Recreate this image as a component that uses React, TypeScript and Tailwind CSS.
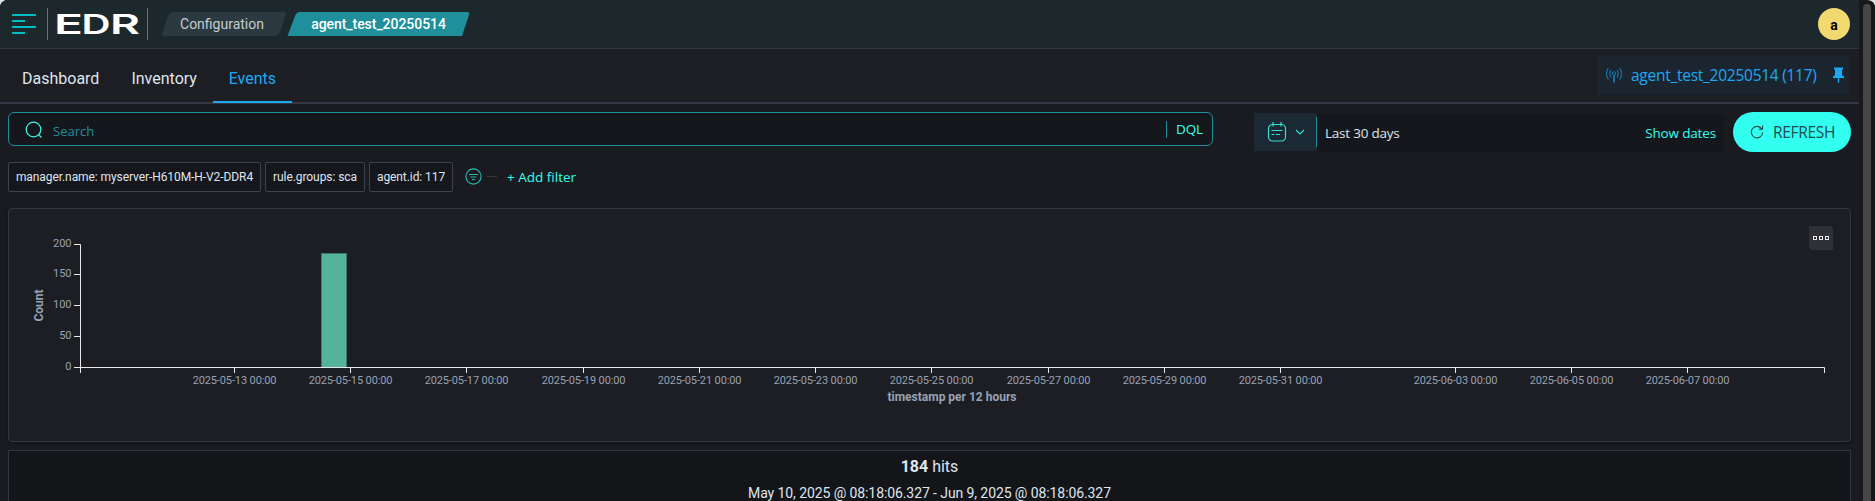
import React from "react";

const SEGOE = "font-['Open_Sans','Noto_Sans',sans-serif]";

const yTicks = [
  { label: "200", y: 244.5 },
  { label: "150", y: 274.5 },
  { label: "100", y: 305.5 },
  { label: "50", y: 336.5 },
  { label: "0", y: 367.5 },
];

const xTicks = [
  { label: "2025-05-13 00:00", x: 234.5 },
  { label: "2025-05-15 00:00", x: 350.5 },
  { label: "2025-05-17 00:00", x: 466.5 },
  { label: "2025-05-19 00:00", x: 583.5 },
  { label: "2025-05-21 00:00", x: 699.5 },
  { label: "2025-05-23 00:00", x: 815.5 },
  { label: "2025-05-25 00:00", x: 931.5 },
  { label: "2025-05-27 00:00", x: 1048.5 },
  { label: "2025-05-29 00:00", x: 1164.5 },
  { label: "2025-05-31 00:00", x: 1280.5 },
  { label: "2025-06-03 00:00", x: 1455.5 },
  { label: "2025-06-05 00:00", x: 1571.5 },
  { label: "2025-06-07 00:00", x: 1687.5 },
];

function Header() {
  return (
    <header className="flex h-[49px] shrink-0 items-start border-b border-[#343741] bg-[#1d282c]">
      <svg className="ml-3 mt-[14px] h-5 w-6" viewBox="0 0 24 20" fill="#00bfc3">
        <rect x="0" y="0" width="24" height="2" />
        <rect x="0" y="6" width="13" height="2" />
        <rect x="0" y="12" width="24" height="2" />
        <rect x="0" y="18" width="13" height="2" />
      </svg>
      <div className="ml-[11px] mt-2 flex h-8 w-[101px] items-start border-x border-[#1f8f9b]">
        <svg className="h-8 w-[99px]" viewBox="0 0 99 32">
          <g fill="#fff" fontFamily="Inter, sans-serif" fontWeight="600" fontSize="27">
            <text x="6" y="25.800" textLength="29" lengthAdjust="spacingAndGlyphs">E</text>
            <text x="33.500" y="25.800" textLength="29" lengthAdjust="spacingAndGlyphs">D</text>
            <text x="62" y="25.800" textLength="30" lengthAdjust="spacingAndGlyphs">R</text>
          </g>
        </svg>
      </div>
      <nav className="ml-[13px] mt-3 flex h-6 text-sm leading-6">
        <div className="relative flex w-[126px] justify-center">
          <svg className="absolute inset-0 h-6 w-[126px]" viewBox="0 0 126 24">
            <path d="M10 0H123Q126 0 125 3L119 20Q117.500 24 114 24H3Q0 24 1 21L7 4Q8.500 0 12 0Z" fill="#2b3a40" />
          </svg>
          <span className="relative right-[2px] text-[#c5ccd0]">Configuration</span>
        </div>
        <div className="relative flex w-[183px] justify-center">
          <svg className="absolute inset-0 h-6 w-[183px]" viewBox="0 0 183 24">
            <path d="M11 0H180Q183 0 182 3L175 24H0.500L8 4Q9.500 0 13 0Z" fill="#1f8f9b" />
          </svg>
          <span className="relative font-medium tracking-[-0.05px] text-white">agent_test_20250514</span>
        </div>
      </nav>
      <div className="ml-auto mr-[9px] mt-2 flex size-8 items-center justify-center rounded-full bg-[#f1d86f] pt-[2px] text-sm font-bold text-black">
        a
      </div>
    </header>
  );
}

function Tabs() {
  return (
    <div className="flex h-[55px] shrink-0 items-start border-b-2 border-[#343741] bg-[#1d1e24] text-base text-[#dfe5ef]">
      <span className="ml-[22px] mt-[18px]">Dashboard</span>
      <span className="ml-8 mt-[18px]">Inventory</span>
      <span className="ml-4 flex h-[54px] w-[79px] shrink-0 justify-center border-b-2 border-[#1ba9f5] pt-[18px] text-[#1ba9f5]">Events</span>
      <div className={`ml-auto mr-[9px] mt-[6px] flex h-10 w-[253px] shrink-0 items-center bg-[#1b2530] text-[#1ba9f5] ${SEGOE}`}>
        <svg className="ml-[9px] h-4 w-4" viewBox="0 0 16 16" fill="none" stroke="#1d86bf" strokeWidth="1">
          <circle cx="8" cy="6.500" r="1.700" />
          <path d="M8 8.500V15.500" strokeWidth="1.600" />
          <path d="M4.800 3Q2.600 6.500 4.800 10.500M11.200 3Q13.400 6.500 11.200 10.500M2.300 1Q-1.300 6.500 2.300 12.500M13.700 1Q17.300 6.500 13.700 12.500" />
        </svg>
        <span className="ml-[9px] w-[187px] whitespace-nowrap pt-[2px] text-[15.5px] tracking-[-0.26px]">agent_test_20250514 (117)</span>
        <svg className="ml-[15px] h-4 w-[11px]" viewBox="0 0 11 16" fill="#1ba9f5">
          <path d="M1 0.500H10V2L9 3V8L11 9.500V11H6.200V15.500H4.800V11H0V9.500L2 8V3L1 2Z" />
        </svg>
      </div>
    </div>
  );
}

function QueryBar() {
  return (
    <div className={`flex h-10 items-start ${SEGOE}`}>
      <div className="flex h-[34px] w-[1205px] shrink-0 items-center rounded-[6px] border border-[#1f8f9b] bg-[#16171c] text-sm">
        <svg className="ml-[16px] mt-px h-[18px] w-[18px]" viewBox="0 0 18 18" fill="none" stroke="#3df5e3" strokeWidth="1.2">
          <circle cx="8.500" cy="8.500" r="7.300" />
          <path d="M13.500 13.500L16.500 16.500" />
        </svg>
        <span className="ml-[10px] mt-[5px] text-[13px] text-[#1f8f9b]">Search</span>
        <div className="ml-auto mr-[9px] flex h-[17px] items-center border-l border-[#1f8f9b] pl-[9px] pt-px text-[13.5px] tracking-[-0.1px] text-[#33fff0]">DQL</div>
      </div>
      <div className="ml-[41px] mt-px flex h-[38px] w-[63px] shrink-0 items-center bg-[#1b2934]">
        <svg className="ml-[13px] h-5 w-5" viewBox="0 0 20 20" fill="none" stroke="#33e0d2" strokeWidth="1.2">
          <rect x="1.500" y="2.500" width="17" height="16.500" rx="4" />
          <path d="M6 0V4.500M14 0V4.500M4.500 8.500H15.500M4.500 12.500H7.500M9 12.500H13" />
        </svg>
        <svg className="ml-[8px] h-[6px] w-[10px]" viewBox="0 0 10 6" fill="none" stroke="#33e0d2" strokeWidth="1.2">
          <path d="M1 1L5 5L9 1" />
        </svg>
        <div className="ml-auto h-[30px] w-px bg-[#1f8f9b]" />
      </div>
      <div className="mt-[2px] flex h-[38px] w-[407px] shrink-0 items-center justify-between bg-[#16171c] px-2 text-[13.5px]">
        <span className="tracking-[-0.22px] text-[#dfe5ef]">Last 30 days</span>
        <span className="tracking-[-0.15px] text-[#33fff0]">Show dates</span>
      </div>
      <button className="ml-[9px] flex h-10 w-[118px] shrink-0 items-center rounded-full bg-[#33fff0] text-[15.5px] text-[#1d4b50]">
        <svg className="ml-[17px] h-[14px] w-[14px]" viewBox="0 0 14 14" fill="none" stroke="#1d4b50" strokeWidth="1.1">
          <path d="M11.800 4A5.700 5.700 0 1 0 12.700 7.500M12.500 0.500V4.300H8.800" />
        </svg>
        <span className="ml-[9px] pt-[2px] tracking-[-0.3px]">REFRESH</span>
      </button>
    </div>
  );
}

function Filters() {
  const pill = "flex h-[30px] shrink-0 items-center justify-center whitespace-nowrap rounded-[2px] border border-[#404249] bg-[#16171c] text-xs text-[#dfe5ef]";
  return (
    <div className="mt-[10px] flex h-[30px] items-center gap-1">
      <span className={`w-[253px] tracking-[-0.08px] ${pill}`}>manager.name: myserver-H610M-H-V2-DDR4</span>
      <span className={`w-[100px] tracking-[-0.08px] ${pill}`}>rule.groups: sca</span>
      <span className={`w-[84px] tracking-[-0.08px] ${pill}`}>agent.id: 117</span>
      <svg className="ml-2 h-[17px] w-[17px] -translate-y-px" viewBox="0 0 17 17" fill="none" stroke="#27b8b0" strokeWidth="1.1">
        <circle cx="8.500" cy="8.500" r="7.600" />
        <path d="M4 6.500H13M5.500 9H11.500M7 11.500H10" />
      </svg>
      <div className="ml-px h-px w-[10px] -translate-y-px bg-[#343741]" />
      <span className={`ml-[6px] text-[13.5px] text-[#33fff0] ${SEGOE}`}>+ Add filter</span>
    </div>
  );
}

function Histogram() {
  return (
    <section className="relative mt-4 h-[234px] rounded-[4px] border border-[#343741] bg-[#1d1e24] shadow-[0_1px_3px_rgba(0,0,0,0.35)]">
      <svg className="block h-[232px] w-[1841px]" viewBox="9 209 1841 232" fill="none">
        <rect x="321.500" y="253.500" width="25" height="114" fill="#54b399" stroke="#3b7a6b" />
        <path d="M74 244.500H80.500V373M74 367.500H1824.500V373" stroke="#eaeaea" />
        <path d="M74 274.500H80M74 305.500H80M74 336.500H80" stroke="#eaeaea" />
        <g fill="#98a2b3" fontFamily="Roboto, sans-serif" fontSize="11">
          {yTicks.map((t) => (
            <text key={t.label} x="71.500" y={t.y + 2.5} textAnchor="end">{t.label}</text>
          ))}
          {xTicks.map((t) => (
            <React.Fragment key={t.label}>
              <path d={`M${t.x} 368V373`} stroke="#eaeaea" />
              <text x={t.x} y="384" textAnchor="middle" letterSpacing="-0.12">{t.label}</text>
            </React.Fragment>
          ))}
          <g fontWeight="700" fontSize="12" textAnchor="middle">
            <text x="952" y="401">timestamp per 12 hours</text>
            <text transform="translate(43 305.500) rotate(-90)">Count</text>
          </g>
        </g>
      </svg>
      <button className="absolute right-[17px] top-[17px] flex size-6 items-center justify-center gap-[2px] rounded-bl-[4px] rounded-tr-[4px] bg-[#303136]">
        <i className="size-1 border border-[#eaeaea]" />
        <i className="size-1 border border-[#eaeaea]" />
        <i className="size-1 border border-[#eaeaea]" />
      </button>
    </section>
  );
}

export default function App() {
  return (
    <div className="flex h-[501px] w-[1875px] overflow-hidden bg-[#dfe1e4] font-[Roboto,sans-serif]">
      <div className="flex h-full w-full overflow-hidden rounded-t-[8px] bg-[#18191e]">
        <main className="flex h-full w-[1859px] shrink-0 flex-col bg-[#1a1b20]">
          <Header />
          <Tabs />
          <div className="flex flex-col px-2 pt-2">
            <QueryBar />
            <Filters />
            <Histogram />
            <section className="mt-2 flex h-[60px] flex-col items-center border border-[#343741] bg-[#141519] text-[#dfe5ef]">
              <p className="mt-1 text-base leading-6"><b>184</b> hits</p>
              <p className="mt-[4px] text-sm leading-5 tracking-[-0.09px]">May 10, 2025 @ 08:18:06.327 - Jun 9, 2025 @ 08:18:06.327</p>
            </section>
          </div>
        </main>
        <div className="flex h-full w-4 pl-1 pt-1">
          <div className="h-full w-2 rounded-t-full bg-[#464645]" />
          <div className="-mt-1 h-[501px] w-1 bg-[#14161a]" />
        </div>
      </div>
    </div>
  );
}
